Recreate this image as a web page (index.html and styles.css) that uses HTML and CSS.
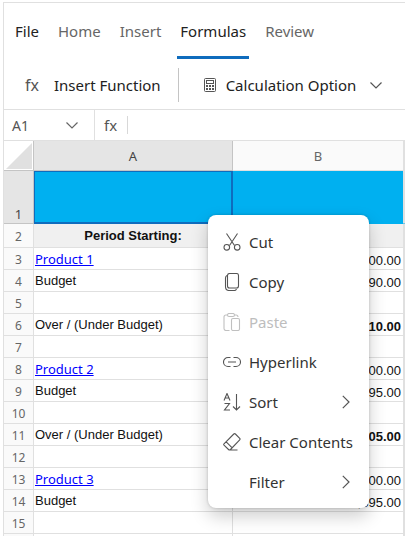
FILE: index.html
```html
<!DOCTYPE html>
<html lang="en">
<head>
<meta charset="utf-8">
<meta name="viewport" content="width=device-width, initial-scale=1">
<title>Spreadsheet</title>
<link rel="stylesheet" href="styles.css">
</head>
<body>
<main class="sheet-app">
  <nav class="tabs">
    <button class="tab file">File</button>
    <button class="tab">Home</button>
    <button class="tab">Insert</button>
    <button class="tab active">Formulas</button>
    <button class="tab">Review</button>
  </nav>
  <div class="toolbar">
    <button class="tool"><span class="fx">fx</span>Insert Function</button>
    <span class="divider"></span>
    <button class="tool calc">
      <svg width="12" height="14" viewBox="0 0 12 14" fill="none" stroke="#555"><rect x=".5" y=".5" width="11" height="13" rx="1"/><rect x="2.5" y="2.5" width="7" height="3"/><path d="M2 8h2M5 8h2M8 8h2M2 11h2M5 11h2M8 11h2" stroke-width="2"/></svg>
      Calculation Option
      <svg class="caret" width="12" height="7" viewBox="0 0 12 7" fill="none" stroke="#555" stroke-width="1.2"><path d="M.5.5 6 6 11.5.5"/></svg>
    </button>
  </div>
  <div class="formula-bar">
    <button class="name-box">A1
      <svg width="12" height="7" viewBox="0 0 12 7" fill="none" stroke="#666" stroke-width="1.2"><path d="M.5.5 6 6 11.5.5"/></svg>
    </button>
    <label class="fx-label" for="formula">fx</label>
    <input id="formula" class="formula" type="text">
  </div>
  <table class="grid">
    <colgroup><col class="col-num"><col class="col-a"><col class="col-b"><col></colgroup>
    <thead>
      <tr><th class="corner"><svg width="26" height="26" viewBox="0 0 26 26"><path d="M26 0v26H0z" fill="#e0e0e0"/></svg></th><th class="selected">A</th><th>B</th><th></th></tr>
    </thead>
    <tbody>
      <tr class="banner"><th class="selected">1</th><td class="active-cell"></td><td></td><td></td></tr>
      <tr class="period"><th>2</th><td>Period Starting:</td><td></td><td></td></tr>
      <tr><th>3</th><td class="link"><a href="#">Product 1</a></td><td class="low">500.00</td><td></td></tr>
      <tr><th>4</th><td>Budget</td><td class="low">490.00</td><td></td></tr>
      <tr><th>5</th><td></td><td></td><td></td></tr>
      <tr><th>6</th><td>Over / (Under Budget)</td><td class="low total">10.00</td><td></td></tr>
      <tr><th>7</th><td></td><td></td><td></td></tr>
      <tr><th>8</th><td class="link"><a href="#">Product 2</a></td><td class="low">600.00</td><td></td></tr>
      <tr><th>9</th><td>Budget</td><td class="low">495.00</td><td></td></tr>
      <tr><th>10</th><td></td><td></td><td></td></tr>
      <tr><th>11</th><td>Over / (Under Budget)</td><td class="low total">105.00</td><td></td></tr>
      <tr><th>12</th><td></td><td></td><td></td></tr>
      <tr><th>13</th><td class="link"><a href="#">Product 3</a></td><td class="low">2,000.00</td><td></td></tr>
      <tr><th>14</th><td>Budget</td><td class="low">1,895.00</td><td></td></tr>
      <tr><th>15</th><td></td><td></td><td></td></tr>
      <tr><th></th><td></td><td></td><td></td></tr>
    </tbody>
  </table>
</main>
<div class="menu" role="menu">
  <button class="item" role="menuitem">
    <svg class="icon" viewBox="0 0 18 18"><path d="M3.5.5l8 12M14.500.5l-8 12"/><circle cx="3.800" cy="14.300" r="2.800"/><circle cx="14.200" cy="14.300" r="2.800"/></svg>Cut</button>
  <button class="item" role="menuitem">
    <svg class="icon" viewBox="0 0 18 18"><rect x="4.500" y=".5" width="11" height="14.500" rx="2"/><path d="M4 2.500C2.800 3 2.500 3.500 2.500 5v8.500c0 2.500 1 4 3.500 4h5.500c1 0 1.500-.5 2-1.500"/></svg>Copy</button>
  <button class="item" role="menuitem" disabled>
    <svg class="icon" viewBox="0 0 18 18"><path d="M4.500 2H3C1.800 2 1 2.800 1 4v11.500c0 1.200.8 2 2 2h3.500M11.500 2H13c1.200 0 2 .8 2 2"/><rect x="4.500" y=".5" width="7" height="3" rx="1.500"/><rect x="8.500" y="5.500" width="8" height="12" rx="1.500"/></svg>Paste</button>
  <button class="item" role="menuitem">
    <svg class="icon" viewBox="0 0 18 18"><path d="M7.500 4.500H5a4.500 4.500 0 0 0 0 9h2.500M10.500 4.500H13a4.500 4.500 0 0 1 0 9h-2.500M5 9h8"/></svg>Hyperlink</button>
  <button class="item" role="menuitem">
    <svg class="icon" viewBox="0 0 18 18"><path d="M1 7.500 4 .5l3 7M2 5h4M1.500 10.500h5l-5 6.500h5.500M13.500 1v16M10 13.500l3.500 3.500 3.500-3.500"/></svg>Sort
    <svg class="more" width="8" height="14" viewBox="0 0 8 14"><path d="M.8.8 7 7 .8 13.200"/></svg></button>
  <button class="item" role="menuitem">
    <svg class="icon" viewBox="0 0 18 18"><path d="M1 10.800 10.800 1q.8-.8 1.600 0l4.300 4.300q.8.800 0 1.600L7.500 16.500q-1 1-2 0L1 12.200q-.7-.7 0-1.400zM3.200 8.800l6 6M6.500 17h8"/></svg>Clear Contents</button>
  <button class="item" role="menuitem"><span class="icon"></span>Filter
    <svg class="more" width="8" height="14" viewBox="0 0 8 14"><path d="M.8.8 7 7 .8 13.200"/></svg></button>
</div>
</body>
</html>
```
FILE: styles.css
```css
* { box-sizing: border-box; }
html { height: 100%; }
body {
  height: 100%;
  margin: 0;
  position: relative;
  overflow: hidden;
  background: #fff;
  color: #222;
  font-family: "Noto Sans", "Open Sans", sans-serif;
  font-size: 15px;
}
button { margin: 0; padding: 0; border: 0; background: none; font: inherit; color: inherit; white-space: nowrap; }
.sheet-app { margin: 2px 0 0 3px; border-top: 1px solid #e0e0e0; border-left: 1px solid #e0e0e0; }
.tabs { display: flex; height: 56px; padding-left: 8px; gap: 13px; }
.tab { padding: 2px 3px 0; color: #666; border-bottom: 3px solid transparent; }
.tab.file { color: #222; }
.tab.active { color: #222; border-bottom-color: #0f6cbd; }
.toolbar { display: flex; align-items: center; height: 51px; padding: 2px 16px 0 21px; border-bottom: 1px solid #e0e0e0; }
.tool { display: flex; align-items: center; gap: 15px; }
.fx { color: #555; font-size: 16px; }
.divider { width: 1px; height: 34px; margin: 0 25px 0 17px; background: #c4c4c4; }
.tool.calc { gap: 10px; }
.tool .caret { margin-left: 4px; }
.formula-bar { display: flex; align-items: center; height: 31px; border-bottom: 1px solid #e0e0e0; color: #555; font-size: 14px; }
.name-box { display: flex; align-items: center; justify-content: space-between; width: 91px; height: 30px; padding: 0 16px 0 8px; border-right: 1px solid #e0e0e0; }
.fx-label { padding: 0 10px 0 9px; font-size: 15px; }
.formula { flex: 1; min-width: 0; height: 18px; padding: 0 6px; border: 0; border-left: 1px solid #d8d8d8; outline: 0; font: inherit; }

.grid { width: 100%; table-layout: fixed; border-collapse: separate; border-spacing: 0; }
.col-num { width: 30px; }
.col-a { width: 199px; }
.col-b { width: 171px; }
.grid th, .grid td { padding: 0; border-right: 1px solid #e0e0e0; border-bottom: 1px solid #e0e0e0; overflow: hidden; white-space: nowrap; line-height: 16px; }
.grid th { background: #fafafa; color: #666; font-weight: 400; font-size: 12px; }
.grid thead th { height: 30px; font-size: 13px; }
.grid tbody th { height: 22px; vertical-align: bottom; padding-bottom: 1px; }
.grid td { height: 22px; padding: 3px 1px 0; vertical-align: top; color: #111; font-family: "Liberation Sans", sans-serif; font-size: 13px; }
.grid th.selected { background: #e5e5e5; color: #444; border-color: #c4c4c4; }
.grid .corner { background: #fff; border-color: #c4c4c4; }
.corner svg { display: block; margin: 1px auto 0; }
.grid .banner th { height: 53px; font-size: 13px; }
.grid .banner td { height: 53px; background: #00b0f0; border-bottom-color: #00b0f0; }
.grid .banner .active-cell { border-color: #0f6cbd; box-shadow: inset 1px 1px #0f6cbd, inset -1px -1px #0f6cbd; }
.grid .period th { height: 24px; padding-bottom: 2px; }
.grid .period td { height: 24px; padding-top: 4px; background: #f0f0f0; font-weight: 700; text-align: center; }
.grid td.link { padding-top: 4px; font-family: "Noto Sans", sans-serif; line-height: 15px; }
.link a { color: #00f; }
.grid td.low { text-align: right; vertical-align: bottom; padding: 0 2px 0 0; }
.grid td.total { font-weight: 700; }

.menu { position: absolute; top: 215px; left: 208px; width: 161px; padding: 7px 0 6px; background: #fff; border-radius: 8px; box-shadow: 0 0 3px rgba(0, 0, 0, .2), 0 8px 18px rgba(0, 0, 0, .2); }
.item { display: flex; align-items: center; width: 100%; height: 40px; padding: 0 18px 0 15px; color: #333; font-size: 15px; }
.item:last-child, .item:nth-child(5) { padding-right: 19px; }
.item:disabled { color: #bdbdbd; }
.icon { width: 18px; height: 18px; margin-right: 8px; fill: none; stroke: #555; stroke-width: 1.1; flex: none; }
.item:disabled .icon { stroke: #c0c0c0; }
.more { margin-left: auto; fill: none; stroke: #555; stroke-width: 1.2; }
```
